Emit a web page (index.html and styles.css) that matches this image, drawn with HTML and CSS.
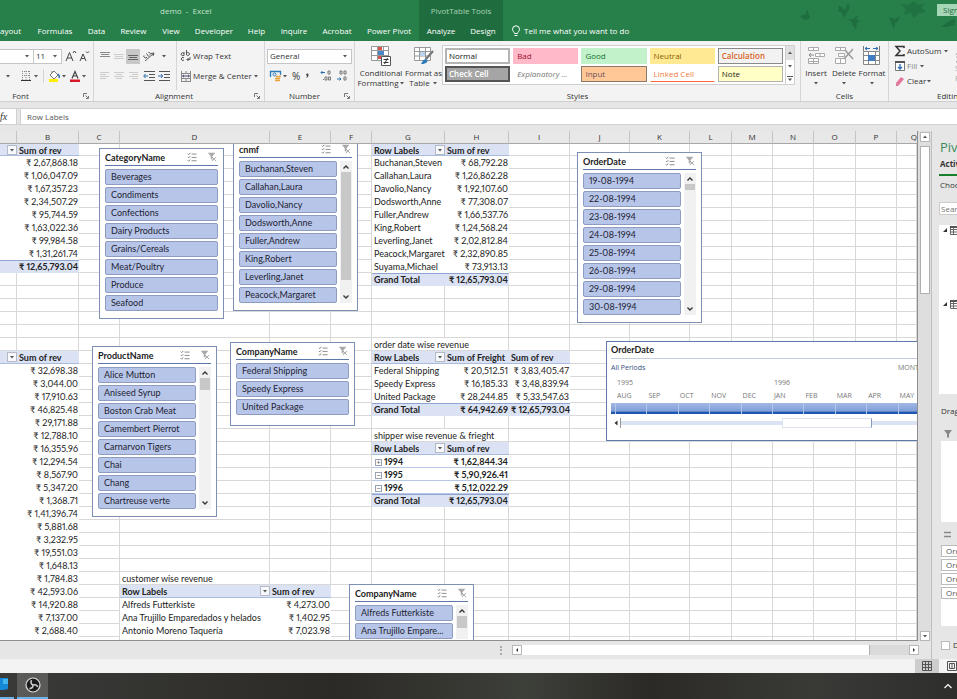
FILE: index.html
```html
<!DOCTYPE html>
<html lang="en">
<head>
<meta charset="utf-8">
<title>demo - Excel</title>
<link rel="stylesheet" href="styles.css">
</head>
<body>
<svg class="defs" aria-hidden="true">
  <symbol id="multi" viewBox="0 0 12 12"><path d="M1 2l1 1 2-2M1 6l1 1 2-2M1 10l1 1 2-2" fill="none" stroke="#666"/><path d="M5.500 2.500h6M5.500 6.500h6M5.500 10.500h6" stroke="#777"/></symbol>
  <symbol id="clear" viewBox="0 0 12 12"><path d="M1 1h9L6.500 5v5L4.500 8V5z" fill="#a8a8a8"/><path d="M6 6l5 5M11 6l-5 5" stroke="#999" fill="none"/></symbol>
  <symbol id="caret" viewBox="0 0 6 4"><path d="M1 1h4L3 3.400z" fill="#555"/></symbol>
  <symbol id="up" viewBox="0 0 8 6"><path d="M1.500 4.500L4 2l2.500 2.500" fill="none" stroke="#333" stroke-width="1.300"/></symbol>
  <symbol id="down" viewBox="0 0 8 6"><path d="M1.500 1.500L4 4l2.500-2.500" fill="none" stroke="#333" stroke-width="1.300"/></symbol>
  <symbol id="launch" viewBox="0 0 6 6"><path d="M.5 4V.5H4M2.500 2.500L5 5M5.500 3v2.500H3" fill="none" stroke="#777"/></symbol>
  <symbol id="tbl" viewBox="0 0 10 10"><path d="M.5 1.500h9v8h-9zM.5 4.500h9M.5 7h9M3.500 2v7" fill="#fff" stroke="#666"/><path d="M0 1h10v2H0z" fill="#555"/></symbol>
</svg>
<div class="app">
  <header class="top">
    <div class="titles">
      <span class="title">demo&nbsp; -&nbsp; Excel</span>
      <span class="ctx">PivotTable Tools</span>
      <svg class="leaves" viewBox="0 0 160 32" aria-hidden="true"><g fill="#1f6e40">
        <path d="M3 16l6-2 1-5 2 6 1 3-4 2-3-1z"/><path d="M42 5l6 5 3-7 2 4-3 6-4 5-1-5-4-2z"/><path d="M50 19l6 0 5-4-1 5 4 1-4 2-1 6-3-3-2-5z"/><path d="M92 17l6 2 5-3-2 5-3 2-1 6-3-6z"/><path d="M104 4l8 1 4-4 5 4 6-2-2 5 4 4-7 1-5 5-3-5-8 2 3-5z" opacity=".8"/><path d="M144 27l8-6 6-2v6l-8 2z"/>
      </g></svg>
      <button class="sign">Sign</button>
    </div>
    <nav class="tabs">
      <a href="#" class="cut">Layout</a><a href="#">Formulas</a><a href="#">Data</a><a href="#">Review</a><a href="#">View</a><a href="#">Developer</a><a href="#">Help</a><a href="#">Inquire</a><a href="#">Acrobat</a><a href="#">Power Pivot</a><a href="#" class="dark">Analyze</a><a href="#" class="dark">Design</a>
      <a href="#" class="tell"><svg width="10" height="12" viewBox="0 0 10 12"><path d="M3.500 8.500C3.500 7 1.500 6.500 1.500 4.300a3.500 3.500 0 0 1 7 0C8.500 6.500 6.500 7 6.500 8.500zM3.500 10.500h3" fill="none" stroke="#fff"/></svg>Tell me what you want to do</a>
    </nav>
  </header>

  <section class="ribbon">
    <div class="group g-font">
      <div class="body rows">
        <div class="line">
          <span class="combo w-name"><select aria-label="Font"><option></option></select><svg><use href="#caret"/></svg></span><span class="combo w-size"><select aria-label="Font size"><option>11</option></select><svg><use href="#caret"/></svg></span>
          <button class="ic" aria-label="Grow font"><svg width="14" height="12" viewBox="0 0 14 12"><path d="M1 11L4.500 2.500 8 11M2.200 8h4.600M8 3l1.500-2L11 3" fill="none" stroke="#444"/></svg></button>
          <button class="ic" aria-label="Shrink font"><svg width="14" height="12" viewBox="0 0 14 12"><path d="M1 11L4 4 7 11M2.200 8.500h3.600M7 1.500L8.500 3 10 1.500" fill="none" stroke="#444"/></svg></button>
        </div>
        <div class="line l2">
          <svg class="c"><use href="#caret"/></svg>
          <button class="ic m10" aria-label="Borders"><svg width="10" height="12" viewBox="0 0 10 12"><path d="M1.500 1v9M5 1v9M8.500 1v9M1 1.500h8M1 5.500h8" stroke="#888" stroke-dasharray="1 1"/><path d="M0 10.500h10" stroke="#333"/></svg></button><svg class="c m2"><use href="#caret"/></svg><i class="vr"></i>
          <button class="ic" aria-label="Fill colour"><svg width="13" height="13" viewBox="0 0 13 13"><path d="M2 5l4-4 4 4-4 4zM4 3V1" fill="#fff" stroke="#777"/><path d="M10 4c1 1 1.500 3 1 4" stroke="#2b6cb0" stroke-width="1.500" fill="none"/><path d="M1 9h9v3H1z" fill="#ffee00"/></svg></button><svg class="c"><use href="#caret"/></svg>
          <button class="ic m2" aria-label="Font colour"><svg width="12" height="13" viewBox="0 0 12 13"><path d="M3 8.500L6 1.500 9 8.500M4 6h4" fill="none" stroke="#444" stroke-width="1.200"/><path d="M1 9.500h10v2.500H1z" fill="#d8182a"/></svg></button><svg class="c"><use href="#caret"/></svg>
        </div>
      </div>
      <div class="label"><span>Font</span><svg><use href="#launch"/></svg></div>
    </div>
    <div class="group g-align">
      <div class="body cols">
        <div class="agrid">
          <button aria-label="Top align"><svg viewBox="0 0 10 10"><path d="M0 1.500h10M1 3.500h8M0 5.500h10" stroke="#888"/></svg></button>
          <button aria-label="Middle align"><svg viewBox="0 0 10 10"><path d="M0 3.500h10M1 5.500h8M0 7.500h10" stroke="#cccccc"/></svg></button>
          <button class="on" aria-label="Bottom align"><svg viewBox="0 0 10 10"><path d="M0 4.500h10M1 6.500h8M0 8.500h10" stroke="#666"/></svg></button>
          <button class="wide" aria-label="Orientation"><svg viewBox="0 0 12 12"><path d="M2 11L11 3M11 3l-1 3M11 3L8 3.500M1 5.500a1.500 1.500 0 1 0 3 1.500M3.500 3.500l2 3M6.500 5a1.200 1.200 0 1 0-1-2.500" fill="none" stroke="#555"/></svg></button><svg class="c"><use href="#caret"/></svg>
          <button aria-label="Align left"><svg viewBox="0 0 10 10"><path d="M0 1.500h9M0 3.500h6M0 5.500h9M0 7.500h6" stroke="#cccccc"/></svg></button>
          <button aria-label="Centre"><svg viewBox="0 0 10 10"><path d="M0 1.500h10M2 3.500h6M0 5.500h10M2 7.500h6" stroke="#cccccc"/></svg></button>
          <button aria-label="Align right"><svg viewBox="0 0 10 10"><path d="M1 1.500h9M4 3.500h6M1 5.500h9M4 7.500h6" stroke="#cccccc"/></svg></button>
          <button class="wide" aria-label="Decrease indent"><svg viewBox="0 0 12 12"><path d="M1 1.500h11M6 4.500h6M6 7.500h6M1 10.500h11" stroke="#555"/><path d="M5 6H1M2.500 4L.7 6l1.800 2" stroke="#2b6cb0" fill="none"/></svg></button>
          <button class="wide" aria-label="Increase indent"><svg viewBox="0 0 12 12"><path d="M1 1.500h11M6 4.500h6M6 7.500h6M1 10.500h11" stroke="#555"/><path d="M0 6h4M3 4l1.800 2L3 8" stroke="#2b6cb0" fill="none"/></svg></button>
        </div>
        <div class="wraps">
          <button><svg width="12" height="12" viewBox="0 0 12 12"><path d="M4 3.500a1.500 1.500 0 1 0 0 1.500M4 2v3.500M6.500 0v5M6.500 3.500a1.500 1.500 0 1 1 0 1M4 8a1.500 1.500 0 1 0 0 2M10 7v2.500H7M8.500 8L7 9.500 8.500 11" fill="none" stroke="#555"/></svg>Wrap Text</button>
          <button><svg width="12" height="12" viewBox="0 0 12 12"><path d="M1.500 1v10M10.500 1v10M1 3.500h10M1 8.500h10M6 1v2M6 9v2M1 11.500h10" stroke="#888" fill="none"/><path d="M2.500 6h7M4 4.800L2.700 6 4 7.200M8 4.800L9.300 6 8 7.200" stroke="#446" fill="none"/></svg>Merge &amp; Center<svg class="c"><use href="#caret"/></svg></button>
        </div>
      </div>
      <div class="label"><span>Alignment</span><svg><use href="#launch"/></svg></div>
    </div>
    <div class="group g-num">
      <div class="body rows">
        <div class="line"><span class="combo w-num"><select aria-label="Number format"><option>General</option></select><svg><use href="#caret"/></svg></span></div>
        <div class="line l2">
          <button class="ic m4" aria-label="Accounting format"><svg width="13" height="12" viewBox="0 0 13 12"><path d="M1.500 7V1.500h10V5" fill="none" stroke="#2b7bbb" stroke-width="1.300"/><circle cx="5.500" cy="4.500" r="1.500" fill="none" stroke="#2b7bbb"/><path d="M6 10.500h5M6 8.500h5M7 6.500h5" stroke="#e8a33d" stroke-width="1.400"/></svg></button><svg class="c"><use href="#caret"/></svg>
          <button class="ic pct m4" aria-label="Percent">%</button><button class="ic comma m4" aria-label="Comma"><svg width="6" height="12" viewBox="0 0 6 12"><path d="M3 3.500a1.200 1.200 0 0 1 1.500 1.200C4.500 6.500 3.500 7.500 2 8c.7-.8 1-1.500 1-2.200a1.200 1.200 0 0 1 0-2.300z" fill="#444"/></svg></button>
          <button class="ic m10" aria-label="Increase decimal"><svg width="12" height="12" viewBox="0 0 12 12"><path d="M5 2.500H1M2.500 1L1 2.500 2.500 4" stroke="#2b6cb0" fill="none"/><path d="M8 1h2v3H8zM5 7h2v3H5zM8.500 7h2v3h-2zM3 9.500h1" fill="none" stroke="#777"/></svg></button>
          <button class="ic m4" aria-label="Decrease decimal"><svg width="12" height="12" viewBox="0 0 12 12"><path d="M1 9h4M3.500 7.500L5 9l-1.500 1.500" stroke="#2b6cb0" fill="none"/><path d="M4 1h2v3H4zM8 1h2v3H8zM8 7h2v3H8z" fill="none" stroke="#777"/></svg></button>
        </div>
      </div>
      <div class="label"><span>Number</span><svg><use href="#launch"/></svg></div>
    </div>
    <div class="group g-styles">
      <div class="body cols">
        <button class="big cf"><svg width="20" height="20" viewBox="0 0 20 20"><path d="M.5.5h17v14H.5zM6.500 0v15M12.500 0v15M0 4.500h18M0 9.500h18" fill="#fff" stroke="#999"/><path d="M7 1h4v3H7zM7 10h3v3H7z" fill="#d9534f"/><path d="M7 5h6v4H7z" fill="#4a86c5"/><path d="M10.500 10.500h9v9h-9z" fill="#fff" stroke="#555"/><path d="M12.500 13.500h5M12.500 16.500h5M16.500 12l-3 6" stroke="#333" fill="none"/></svg><span>Conditional</span><span>Formatting<svg class="c"><use href="#caret"/></svg></span></button>
        <button class="big ft"><svg width="20" height="20" viewBox="0 0 20 20"><path d="M.5 1.500h16v13H.5zM5.500 2v13M11.500 2v13M0 5.500h17M0 10h17" fill="#fff" stroke="#999"/><path d="M6 6h5v4H6z" fill="#b8d4ee"/><path d="M19 5l-7 8" stroke="#777" stroke-width="2.200"/><path d="M7 18c1-1 2-5 5-5 2 1 2 3 0 4s-4 1-5 1z" fill="#2b7bbb"/></svg><span>Format as</span><span>Table<svg class="c m2"><use href="#caret"/></svg></span></button>
        <div class="gallery">
          <button class="normal">Normal</button><button class="bad">Bad</button><button class="good">Good</button><button class="neutral">Neutral</button><button class="calc">Calculation</button>
          <button class="check">Check Cell</button><button class="expl">Explanatory ...</button><button class="input">Input</button><button class="linked">Linked Cell</button><button class="note">Note</button>
        </div>
        <div class="gscroll"><button class="off" aria-label="Up"><svg class="c flip"><use href="#caret"/></svg></button><button aria-label="Down"><svg class="c"><use href="#caret"/></svg></button><button aria-label="More"><svg width="6" height="7" viewBox="0 0 6 7"><path d="M0 1.500h6" stroke="#555"/><path d="M1 3.500h4L3 6z" fill="#555"/></svg></button></div>
      </div>
      <div class="label"><span>Styles</span></div>
    </div>
    <div class="group g-cells">
      <div class="body cols">
        <button class="big"><svg width="20" height="20" viewBox="0 0 20 20"><path d="M2.500 1.500h10v3h-10zM7.500 1v4M2.500 12.500h10v5h-10zM7.500 12v6M2 15.500h11M9.500 7.500h9v3h-9zM14 7v4" fill="#fff" stroke="#aaa"/><path d="M8 9H3M5 7L3 9l2 2" stroke="#888" fill="none"/></svg><span>Insert</span><svg class="c"><use href="#caret"/></svg></button>
        <button class="big"><svg width="20" height="20" viewBox="0 0 20 20"><path d="M1.500 1.500h10v3h-10zM6.500 1v4M1.500 12.500h10v5h-10zM6.500 12v6M4.500 7.500h6v3h-6z" fill="#fff" stroke="#aaa"/><path d="M11 4l8 9M19 3l-9 10" stroke="#999" stroke-width="1.500" fill="none"/></svg><span>Delete</span><svg class="c"><use href="#caret"/></svg></button>
        <button class="big"><svg width="20" height="20" viewBox="0 0 20 20"><path d="M1.500 5.500h16v13h-16zM6.500 5v14M13.500 5v14M1 9.500h17M1 14.500h17" fill="#fff" stroke="#888"/><path d="M6 9h7v6H6z" fill="#3f7cc4"/><path d="M1.500 0v5M17.500 0v5" stroke="#777"/><path d="M3 2.500h5M11 2.500h5M5 1L3 2.500 5 4M14 1l2 1.500L14 4" stroke="#2b6cb0" fill="none"/></svg><span>Format</span><svg class="c"><use href="#caret"/></svg></button>
      </div>
      <div class="label"><span>Cells</span></div>
    </div>
    <div class="group g-edit">
      <div class="body rows3">
        <button><svg width="12" height="12" viewBox="0 0 12 12"><path d="M10 3V1.500H2L6 6l-4 4.500h8V9" fill="none" stroke="#333" stroke-width="1.500"/></svg>AutoSum<svg class="c m2"><use href="#caret"/></svg></button>
        <button class="dim"><svg width="12" height="12" viewBox="0 0 12 12"><path d="M1.500 1.500h9v9h-9z" fill="#fff" stroke="#777"/><path d="M1 1h10v2H1z" fill="#555"/><path d="M6 4v5M4 7l2 2 2-2" stroke="#2b6cb0" stroke-width="1.300" fill="none"/></svg>Fill<svg class="c m2"><use href="#caret"/></svg></button>
        <button><svg width="12" height="12" viewBox="0 0 12 12"><path d="M2 8l5-6 3 2-5 6z" fill="#e5779a"/><path d="M2 8l3 2-1 1H2z" fill="#b05" opacity=".5"/></svg>Clear<svg class="c"><use href="#caret"/></svg></button>
      </div>
      <div class="sort"><svg width="8" height="14" viewBox="0 0 8 14"><path d="M1 6l3-5 3 5M2 4h4M1 8h5l-5 5h5" fill="none" stroke="#aaa"/></svg><span>S</span><span>F</span></div>
      <div class="label"><span>Editing</span></div>
    </div>
  </section>

  <div class="fbar"><button class="fx" aria-label="Insert function"><i>fx</i></button><input aria-label="Formula bar" value="Row Labels"></div>

  <main class="work">
    <div class="book">
      <div class="sheet">
        <table class="grid" id="grid"></table>
        <div class="layer">
          <section class="slicer s-cat"><h2>CategoryName<svg><use href="#multi"/></svg><svg><use href="#clear"/></svg></h2>
            <div class="sbody"><div class="items"><button>Beverages</button><button>Condiments</button><button>Confections</button><button>Dairy Products</button><button>Grains/Cereals</button><button>Meat/Poultry</button><button>Produce</button><button>Seafood</button></div></div></section>
          <section class="slicer s-emp"><h2>cnmf<svg><use href="#multi"/></svg><svg><use href="#clear"/></svg></h2>
            <div class="sbody"><div class="items"><button>Buchanan,Steven</button><button>Callahan,Laura</button><button>Davolio,Nancy</button><button>Dodsworth,Anne</button><button>Fuller,Andrew</button><button>King,Robert</button><button>Leverling,Janet</button><button>Peacock,Margaret</button></div><div class="bar"><svg><use href="#up"/></svg><i class="long"></i><svg><use href="#down"/></svg></div></div></section>
          <section class="slicer s-ord"><h2>OrderDate<svg><use href="#multi"/></svg><svg><use href="#clear"/></svg></h2>
            <div class="sbody"><div class="items"><button>19-08-1994</button><button>22-08-1994</button><button>23-08-1994</button><button>24-08-1994</button><button>25-08-1994</button><button>26-08-1994</button><button>29-08-1994</button><button>30-08-1994</button></div><div class="bar"><svg><use href="#up"/></svg><i class="tiny"></i><svg><use href="#down"/></svg></div></div></section>
          <section class="slicer s-prod"><h2>ProductName<svg><use href="#multi"/></svg><svg><use href="#clear"/></svg></h2>
            <div class="sbody"><div class="items"><button>Alice Mutton</button><button>Aniseed Syrup</button><button>Boston Crab Meat</button><button>Camembert Pierrot</button><button>Carnarvon Tigers</button><button>Chai</button><button>Chang</button><button>Chartreuse verte</button></div><div class="bar"><svg><use href="#up"/></svg><i></i><svg><use href="#down"/></svg></div></div></section>
          <section class="slicer s-ship"><h2>CompanyName<svg><use href="#multi"/></svg><svg><use href="#clear"/></svg></h2>
            <div class="sbody"><div class="items"><button>Federal Shipping</button><button>Speedy Express</button><button>United Package</button></div></div></section>
          <section class="slicer s-cust"><h2>CompanyName<svg><use href="#multi"/></svg><svg><use href="#clear"/></svg></h2>
            <div class="sbody"><div class="items"><button>Alfreds Futterkiste</button><button>Ana Trujillo Empare...</button></div><div class="bar"><svg><use href="#up"/></svg><i></i></div></div></section>
          <section class="timeline"><h2>OrderDate</h2>
            <div class="period"><span>All Periods</span><span class="lvl">MONTHS</span></div>
            <div class="months years"><span>1995</span><span></span><span></span><span></span><span></span><span>1996</span></div>
            <div class="months"><span>AUG</span><span>SEP</span><span>OCT</span><span>NOV</span><span>DEC</span><span>JAN</span><span>FEB</span><span>MAR</span><span>APR</span><span>MAY</span></div>
            <div class="months band"><i></i><i></i><i></i><i></i><i></i><i></i><i></i><i></i><i></i><i></i></div>
            <div class="tscroll"><button aria-label="Earlier"><svg width="6" height="6" viewBox="0 0 6 6"><path d="M4.500.5v5L1.500 3z" fill="#333"/></svg></button><i></i><b></b><i></i></div>
          </section>
        </div>
      </div>
      <div class="vscroll"><button aria-label="Scroll up"><svg class="c flip"><use href="#caret"/></svg></button><i></i><button class="end" aria-label="Scroll down"><svg class="c"><use href="#caret"/></svg></button></div>
      <div class="hscroll"><span class="dots"></span><button aria-label="Scroll left"><svg width="6" height="6" viewBox="0 0 6 6"><path d="M4 1v4L2 3z" fill="#333"/></svg></button><span class="track"><i></i></span><button aria-label="Scroll right"><svg width="6" height="6" viewBox="0 0 6 6"><path d="M2 1v4l2-2z" fill="#333"/></svg></button></div>
    </div>
    <aside class="pane">
      <h1>PivotTable</h1>
      <p class="active">Active</p>
      <p class="choose">Choose</p>
      <input class="search" aria-label="Search fields" placeholder="Search">
      <div class="fields"><div><svg class="tri" viewBox="0 0 6 6"><path d="M5 1v4H1z" fill="#333"/></svg><svg class="t"><use href="#tbl"/></svg></div><div><svg class="tri" viewBox="0 0 6 6"><path d="M5 1v4H1z" fill="#333"/></svg><svg class="t"><use href="#tbl"/></svg></div></div>
      <p class="drag">Drag</p>
      <div class="zh"><svg width="10" height="10" viewBox="0 0 10 10"><path d="M1 1h8L6 5v4L4 8V5z" fill="#888"/></svg></div>
      <div class="zone"></div>
      <div class="zh"><svg width="10" height="10" viewBox="0 0 10 10"><path d="M1 2.500h7M1 6.500h7" stroke="#888" stroke-width="1.500"/></svg></div>
      <div class="zone list"><button>Order</button><button>Order</button><button>Order</button><button>Order</button></div>
      <label class="defer"><input type="checkbox">Defer</label>
    </aside>
  </main>

  <footer class="status"><button class="view on" aria-label="Normal view"><svg width="10" height="10" viewBox="0 0 10 10"><path d="M.5.5h9v9h-9zM3.500 0v10M6.500 0v10M0 3.500h10M0 6.500h10" fill="none" stroke="#555"/></svg></button><button class="view" aria-label="Page layout view"><svg width="10" height="10" viewBox="0 0 10 10"><path d="M.5.5h9v9h-9zM2.500 2.500h5v5h-5zM4 4h2M4 6h2" fill="none" stroke="#555"/></svg></button></footer>
  <footer class="taskbar">
    <button class="app1" aria-label="Desktop app"><svg width="8" height="14" viewBox="0 0 8 14"><path d="M0 0h8v11l-4 1H0z" fill="#1688d8"/><path d="M3 1h5v5H3z" fill="#45b5ee"/></svg></button>
    <button class="app2" aria-label="Recorder"><svg width="16" height="16" viewBox="0 0 16 16"><circle cx="8" cy="8" r="7" fill="#1b1b1b" stroke="#ddd" stroke-width="1.200"/><path d="M8 8C6 7 5.500 5 6.500 3.200M8 8c2-.8 4 0 4.800 2M8 8c0 2-1.500 3.600-3.600 3.600" fill="none" stroke="#ccc" stroke-width="1.600"/></svg></button>
    <button class="tray" aria-label="Hidden icons"><svg width="10" height="8" viewBox="0 0 10 8"><path d="M1.500 6L5 2.500 8.500 6" fill="none" stroke="#fff" stroke-width="1.200"/></svg></button>
  </footer>
</div>
<script src="app.js"></script>
</body>
</html>
```
FILE: styles.css
```css
* { box-sizing: border-box; }
body { margin: 0; font: 8px/10px "Open Sans", "Noto Sans", sans-serif; color: #333; overflow: hidden; }
button, input, select { font: inherit; color: inherit; border: 0; padding: 0; margin: 0; background: none; border-radius: 0; }
button { cursor: pointer; white-space: nowrap; }
a { color: inherit; text-decoration: none; }
h1, h2, p { margin: 0; }
svg { display: block; flex: none; }
.defs { position: absolute; width: 0; height: 0; }
.app { height: 100vh; display: flex; flex-direction: column; background: #e6e6e6; }
.c { width: 6px; height: 4px; }
.flip { transform: rotate(180deg); }
.m2 { margin-left: 2px; }
.m4 { margin-left: 4px; }
.m10 { margin-left: 10px; }

.top { flex: none; background: #27804a; color: #fff; }
.titles { display: grid; grid-template-columns: 419px 84px 1fr 140px 20px; height: 21px; align-items: center; }
.title { padding-left: 160px; color: #c4e2cf; }
.ctx { background: #1f6d3e; color: #a9d3b8; height: 21px; line-height: 21px; text-align: center; white-space: nowrap; }
.leaves { grid-column: 4; width: 160px; height: 32px; align-self: start; margin-bottom: -11px; }
.sign { background: #a5d6b5; color: #256e43; height: 12px; line-height: 12px; align-self: start; margin-top: 4px; padding-left: 6px; text-align: left; overflow: hidden; position: relative; }
.tabs { display: grid; grid-template-columns: 30px 50px 33px 41px 34px 52px 33px 42px 44px 60px 44px 40px auto; justify-content: start; height: 20px; }
.tabs a { display: flex; justify-content: center; align-items: center; white-space: nowrap; }
.tabs .cut { justify-content: flex-end; padding-right: 9px; overflow: hidden; }
.tabs .dark { background: #1f6d3e; }
.tabs .tell { padding-left: 8px; gap: 3px; }

.ribbon { flex: none; display: flex; height: 61px; background: #f3f3f3; border-bottom: 1px solid #cfcfcf; overflow: hidden; }
.group { flex: none; display: grid; grid-template-rows: 49px 11px; border-right: 1px solid #d5d5d5; color: #333; }
.g-font { width: 94px; } .g-align { width: 171px; } .g-num { width: 90px; } .g-styles { width: 446px; } .g-cells { width: 88px; }
.g-edit { flex: 1; border: 0; grid-template-columns: 64px 1fr; overflow: hidden; min-width: 0; }
.label { display: flex; align-items: center; justify-content: center; position: relative; }
.label svg { position: absolute; right: 4px; bottom: 2px; width: 6px; height: 6px; }
.g-font .label { padding-right: 52px; }
.g-num .label { padding-right: 10px; }
.g-align .label { padding-right: 10px; }
.rows { display: flex; flex-direction: column; gap: 4px; padding-top: 7px; }
.line { display: flex; align-items: center; height: 16px; }
.l2 { padding-left: 5px; }
.g-num .l2 { padding-left: 0; }
.combo { display: flex; align-items: center; background: #fff; border: 1px solid #c6c6c6; height: 15px; padding-right: 3px; }
.combo select { appearance: none; flex: 1; min-width: 0; padding-left: 2px; outline: 0; }
.combo svg { width: 6px; height: 4px; }
.w-name { width: 34px; border-left: 0; }
.w-size { width: 28px; border-left: 0; margin-right: 3px; }
.w-num { width: 85px; margin-left: 2px; }
.vr { width: 1px; height: 14px; background: #d5d5d5; margin: 0 4px; }
.pct { font-size: 10px; }
.cols { display: flex; }
.agrid { display: grid; grid-template-columns: 14px 14px 14px 18px 12px; grid-template-rows: 16px 16px; gap: 4px 0; padding: 7px 0 0 4px; align-items: center; justify-items: center; width: 83px; border-right: 1px solid #d5d5d5; }
.agrid button { display: flex; align-items: center; justify-content: center; width: 14px; height: 15px; }
.agrid button svg { width: 10px; height: 10px; }
.agrid .wide svg { width: 12px; height: 12px; }
.agrid .on { background: #c8c8c8; }
.wraps { padding: 7px 0 0 3px; display: flex; flex-direction: column; gap: 4px; }
.wraps button { display: flex; align-items: center; gap: 1px; height: 16px; }
.big { display: flex; flex-direction: column; align-items: center; padding-top: 5px; line-height: 10px; }
.big > svg:first-child { margin-bottom: 2px; }
.big span { display: flex; align-items: center; }
.big > .c { margin-top: 3px; }
.cf { width: 50px; padding-left: 2px; }
.ft { width: 37px; }
.gallery { display: grid; grid-template-columns: repeat(5, 1fr); grid-template-rows: 16px 16px; gap: 2px 3px; width: 343px; padding: 2px; margin-top: 4px; height: 40px; background: #fff; border: 1px solid #cfcfcf; border-right: 0; }
.gallery button { text-align: left; padding-left: 3px; overflow: hidden; border: 1px solid transparent; }
.gallery .normal { border: 2px solid #b5b5b5; padding-left: 2px; color: #111; }
.bad { background: #ffb9c8; color: #9c1030; } .good { background: #c2f2c9; color: #157030; } .neutral { background: #ffe993; color: #8a6100; }
.gallery .calc { background: #f2f2f2; border-color: #8a8a8a; color: #d9621e; font-weight: 600; }
.gallery .check { background: #a5a5a5; border: 2px solid #555; padding-left: 2px; color: #fff; font-weight: 600; }
.expl { font-style: italic; color: #777; }
.gallery .input { background: #ffc896; border-color: #8a7a6a; color: #6b5060; }
.gallery .linked { border-bottom: 1px solid #ff6a3c; color: #f07a3c; }
.gallery .note { background: #ffffc6; border-color: #b2b2b2; color: #222; }
.gscroll { display: grid; grid-template-rows: 14px 12px 12px; width: 10px; margin-top: 4px; height: 40px; border: 1px solid #cfcfcf; background: #fff; }
.gscroll button { display: flex; align-items: center; justify-content: center; }
.gscroll .off { background: #e0e0e0; }
.g-cells .cols { padding-left: 1px; }
.g-cells .big { width: 28px; }
.rows3 { display: flex; flex-direction: column; padding: 2px 0 0 5px; }
.rows3 button { display: flex; align-items: center; height: 15px; }
.rows3 svg:first-child { margin-right: 1px; }
.dim { color: #888; }
.sort { padding: 8px 0 0 2px; color: #aaa; overflow: hidden; display: flex; flex-direction: column; }
.g-edit .label { grid-column: 1 / 3; justify-content: flex-start; padding-left: 48px; }

.fbar { flex: none; display: flex; height: 17px; margin: 6px 0; border-top: 1px solid #d0d0d0; border-bottom: 1px solid #d0d0d0; }
.fx { width: 17px; background: #fff; border-right: 1px solid #d0d0d0; font: 10px/14px "Liberation Serif", serif; text-align: left; }
.fbar input { flex: 1; min-width: 0; background: #fff; margin-left: 3px; padding-left: 6px; border-left: 1px solid #d0d0d0; color: #555; outline: 0; }

.work { flex: 1; min-height: 0; display: flex; }
.book { flex: 1; min-width: 0; display: grid; grid-template-columns: 1fr 13px; grid-template-rows: 1fr 18px; }
.sheet { position: relative; overflow: hidden; background: #fff; border-bottom: 1px solid #8f8f8f; border-right: 1px solid #8f8f8f; min-height: 0; min-width: 0; }
.grid { border-collapse: separate; border-spacing: 0; table-layout: fixed; width: 100%; font: 9px/12px Lato, Carlito, sans-serif; font-variant-numeric: proportional-nums; color: #222; }
.grid th { height: 13px; padding: 0; font: 8px/12px "Open Sans", sans-serif; background: #e8e8e8; border-right: 1px solid #c4c4c4; border-bottom: 1px solid #a8a8a8; color: #333; }
.grid th:last-child { text-align: right; border-right: 0; }
.grid td { height: 13px; padding: 1px 1px 0 2px; box-shadow: inset -1px -1px #d8d8d8; white-space: nowrap; vertical-align: top; }
.grid tbody tr:first-child td { height: 12px; line-height: 11px; }
.grid .p { box-shadow: none; background: #fff; }
.grid .spill { box-shadow: inset 0 -1px #d8d8d8; }
.grid .n { text-align: right; }
.grid .h { background: #dbe2f3; box-shadow: inset 0 -1px #a9bbdf; font-weight: 700; padding-right: 0; }
.grid .t { background: #dbe2f3; box-shadow: inset 0 1px #8ea5d2; font-weight: 700; }
.grid .b { font-weight: 700; box-shadow: inset 0 -1px #b9c7e6; }
.cell { display: flex; justify-content: space-between; }
.dd { width: 10px; height: 10px; background: #f7f8fb; border: 1px solid #b5b9c4; display: flex; align-items: center; justify-content: center; }
.exp { display: inline-flex; width: 7px; height: 7px; margin: 0 2px 0 1px; border: 1px solid #9aa3b5; font: 7px/5px "Liberation Sans", sans-serif; justify-content: center; color: #555; }

.layer { position: absolute; inset: 13px 0 0 0; overflow: hidden; pointer-events: none; }
.slicer { position: absolute; width: 125px; height: 171px; padding: 0 5px; background: #fff; border: 1px solid #7d8fb5; font: 9px/14px Lato, Carlito, sans-serif; font-variant-numeric: proportional-nums; color: #222; }
.slicer h2 { display: flex; align-items: center; gap: 8px; height: 17px; border-bottom: 1px solid #5f78ab; font: 700 9px/15px Lato, Carlito, sans-serif; }
.slicer h2 svg { width: 12px; height: 10px; }
.slicer h2 svg:first-of-type { margin-left: auto; }
.sbody { display: flex; gap: 3px; padding-top: 3px; }
.items { flex: 1; display: flex; flex-direction: column; gap: 2px; min-width: 0; }
.items button { height: 16px; border: 1px solid #8d9cc0; border-radius: 2px; background: #b7c6e8; text-align: left; padding-left: 5px; color: #223; overflow: hidden; }
.bar { width: 12px; background: #f1f1f1; display: flex; flex-direction: column; align-items: center; padding: 3px 0; gap: 2px; }
.bar svg { width: 8px; height: 6px; }
.bar svg:last-child { margin-top: auto; }
.bar i { width: 10px; height: 12px; background: #c8c8c8; }
.bar .long { height: 108px; }
.bar .tiny { height: 6px; }
.s-cat { left: 99px; top: 4px; }
.s-emp { left: 233px; top: -4px; }
.s-ord { left: 577px; top: 8px; }
.s-prod { left: 92px; top: 202px; }
.s-ship { left: 230px; top: 198px; height: 84px; }
.s-cust { left: 349px; top: 440px; }
.timeline { position: absolute; left: 606px; top: 197px; width: 328px; height: 100px; padding: 0 4px; background: #fff; border: 1px solid #5f78ab; font-size: 7px; line-height: 12px; color: #777; }
.timeline h2 { height: 17px; border-bottom: 1px solid #c3cce2; font: 700 9px/15px Lato, Carlito, sans-serif; color: #222; }
.period { display: flex; justify-content: space-between; padding: 3px 0; color: #34507f; }
.lvl { color: #777; width: 31px; }
.months { display: grid; grid-template-columns: repeat(10, 1fr); padding-left: 4px; height: 13px; }
.months span { padding-left: 2px; }
.months.band { height: 11px; background: linear-gradient(#a3b9e4, #7f9dd8 75%, #1f56b0 82%); }
.band i { border-left: 1px solid #b4c6ea; }
.tscroll { display: flex; align-items: center; height: 10px; margin-top: 4px; }
.tscroll button { width: 10px; height: 10px; border-right: 1px solid #999; display: flex; align-items: center; justify-content: center; }
.tscroll i { height: 4px; background: #dae2f4; width: 161px; }
.tscroll b { width: 90px; height: 10px; background: #fff; border: 1px solid #dde2ee; border-right-color: #8a9abf; }
.tscroll i:last-child { flex: 1; width: auto; }

.vscroll { display: flex; flex-direction: column; gap: 4px; padding: 1px 1px 0 2px; background: #dedede; }
.vscroll button, .hscroll button { width: 10px; height: 10px; background: #fff; border: 1px solid #b8b8b8; display: flex; align-items: center; justify-content: center; flex: none; }
.vscroll i { width: 10px; height: 148px; background: #fff; border: 1px solid #b0b0b0; }
.vscroll .end { margin-top: auto; }
.hscroll { grid-column: 1 / 3; display: flex; align-items: center; padding-right: 12px; }
.dots { flex: none; width: 3px; height: 9px; margin: 0 9px 0 500px; border-left: 2px dotted #aaa; }
.track { flex: 1; height: 10px; background: #dadada; }
.track i { display: block; width: 90%; height: 10px; background: #fff; border-right: 1px solid #b0b0b0; }

.pane { flex: none; width: 26px; border-left: 1px solid #c0c0c0; padding-left: 7px; overflow: hidden; white-space: nowrap; }
.pane h1 { font: 400 13px/16px "Open Sans", sans-serif; color: #3d8a5b; padding: 8px 0 3px 1px; }
.active { font-weight: 700; padding: 1px 0 3px 1px; color: #333; border-bottom: 2px solid #17802a; height: 18px; }
.choose { padding: 4px 0 0 1px; height: 26px; }
.search { width: 60px; height: 13px; background: #fff; border: 1px solid #ccc; padding-left: 1px; display: block; }
.fields { background: #fff; height: 169px; margin-top: 10px; }
.fields div { height: 74px; display: flex; padding: 0 0 0 3px; gap: 2px; }
.tri { width: 6px; height: 10px; }
.t { width: 10px; height: 10px; }
.drag { padding-top: 12px; height: 32px; margin-left: 2px; }
.zh { display: flex; height: 15px; align-items: center; padding-left: 4px; }
.zone { background: #fff; height: 81px; margin: 0 0 5px 2px; }
.zone.list { display: flex; flex-direction: column; gap: 2px; margin-top: 3px; margin-bottom: 14px; }
.zone.list button { height: 12px; line-height: 10px; border: 1px solid #bbb; text-align: left; padding-left: 4px; color: #555; width: 60px; background: #fff; }
.defer { display: flex; align-items: center; gap: 3px; padding-left: 2px; }
.defer input { appearance: none; width: 9px; height: 9px; background: #fff; border: 1px solid #bbb; flex: none; }

.status { flex: none; height: 14px; background: #f3f3f3; display: flex; justify-content: flex-end; }
.view { width: 18px; display: flex; align-items: center; padding-left: 8px; }
.view.on { width: 24px; background: #cdcdcd; padding-left: 7px; }
.taskbar { flex: none; height: 26px; display: flex; background: linear-gradient(90deg, #3a3b39, #2c2a26 35%, #3d3f39 55%, #2c2a26 68%, #393a36 85%, #2e2f2d); }
.app1 { width: 14px; margin-right: 3px; border-bottom: 2px solid #6fb2e6; display: flex; align-items: center; }
.app2 { width: 31px; background: #5a5b59; border-bottom: 2px solid #6fb2e6; display: flex; align-items: center; justify-content: center; }
.tray { margin-left: auto; width: 14px; display: flex; align-items: center; }
```
FILE: app.js
```js
const columns = [["", 17], ["B", 62], ["C", 41], ["D", 150], ["E", 61], ["F", 41], ["G", 73], ["H", 64], ["I", 61], ["J", 60], ["K", 60], ["L", 42], ["M", 41], ["N", 41], ["O", 42], ["P", 41], ["Q", 0]];
const [A, B, C, D, E, F, G, H, I] = [0, 1, 2, 3, 4, 5, 6, 7, 8];
const cells = {};
const put = (row, col, text, cls) => { cells[row + ":" + col] = { text, cls }; };
const drop = '<button class="dd" aria-label="Filter"><svg class="c"><use href="#caret"/></svg></button>';
const head = (row, col, text) => put(row, col, `<div class="cell"><span>${text}</span>${drop}</div>`, "h");
const total = (row, col, ...values) => {
  put(row, col, "Grand Total", "t");
  values.forEach((v, i) => put(row, col + 1 + i, "₹ " + v, "t n"));
};
const money = (row, col, values) => values.forEach((v, i) => put(row + i, col, "₹ " + v, "p n"));
const names = (row, col, values) => values.forEach((v, i) => put(row + i, col, v, "p"));

head(1, A, "");
put(1, B, "Sum of rev", "h");
money(2, B, ["2,67,868.18", "1,06,047.09", "1,67,357.23", "2,34,507.29", "95,744.59", "1,63,022.36", "99,984.58", "1,31,261.74"]);
names(2, A, Array(8).fill(""));
put(10, A, "", "t");
put(10, B, "₹ 12,65,793.04", "t n");

head(17, A, "");
put(17, B, "Sum of rev", "h");
money(18, B, ["32,698.38", "3,044.00", "17,910.63", "46,825.48", "29,171.88", "12,788.10", "16,355.96", "12,294.54", "8,567.90", "5,347.20", "1,368.71", "1,41,396.74", "5,881.68", "3,232.95", "19,551.03", "1,648.13", "1,784.83", "42,593.06", "14,920.88", "7,137.00", "2,688.40", "4,594.97"]);
names(18, A, Array(22).fill(""));

head(1, G, "Row Labels");
put(1, H, "Sum of rev", "h");
names(2, G, ["Buchanan,Steven", "Callahan,Laura", "Davolio,Nancy", "Dodsworth,Anne", "Fuller,Andrew", "King,Robert", "Leverling,Janet", "Peacock,Margaret", "Suyama,Michael"]);
money(2, H, ["68,792.28", "1,26,862.28", "1,92,107.60", "77,308.07", "1,66,537.76", "1,24,568.24", "2,02,812.84", "2,32,890.85", "73,913.13"]);
total(11, G, "12,65,793.04");

put(16, G, "order date wise revenue", "spill");
head(17, G, "Row Labels");
put(17, H, "Sum of Freight", "h");
put(17, I, "Sum of rev", "h");
names(18, G, ["Federal Shipping", "Speedy Express", "United Package"]);
money(18, H, ["20,512.51", "16,185.33", "28,244.85"]);
money(18, I, ["3,83,405.47", "3,48,839.94", "5,33,547.63"]);
total(21, G, "64,942.69", "12,65,793.04");

put(23, G, "shipper wise revenue &amp; frieght", "spill");
head(24, G, "Row Labels");
put(24, H, "Sum of rev", "h");
[["+", "1994", "1,62,844.34"], ["−", "1995", "5,90,926.41"], ["−", "1996", "5,12,022.29"]].forEach(([sign, year, value], i) => {
  put(25 + i, G, `<span class="exp">${sign}</span>${year}`, "p b");
  put(25 + i, H, "₹ " + value, "p b n");
});
total(28, G, "12,65,793.04");

put(34, D, "customer wise revenue", "");
head(35, D, "Row Labels");
put(35, E, "Sum of rev", "h");
names(36, D, ["Alfreds Futterkiste", "Ana Trujillo Emparedados y helados", "Antonio Moreno Taquería", "Around the Horn"]);
money(36, E, ["4,273.00", "1,402.95", "7,023.98", "13,806.50"]);

let html = "<colgroup>" + columns.map(([, w]) => w ? `<col style="width:${w}px">` : "<col>").join("") + "</colgroup>";
html += "<thead><tr>" + columns.map(([name]) => `<th>${name}</th>`).join("") + "</tr></thead><tbody>";
for (let row = 1; row <= 39; row++) {
  html += "<tr>" + columns.map((_, col) => {
    const cell = cells[row + ":" + col];
    return cell ? `<td class="${cell.cls}">${cell.text}</td>` : "<td></td>";
  }).join("") + "</tr>";
}
document.getElementById("grid").innerHTML = html + "</tbody>";
```
